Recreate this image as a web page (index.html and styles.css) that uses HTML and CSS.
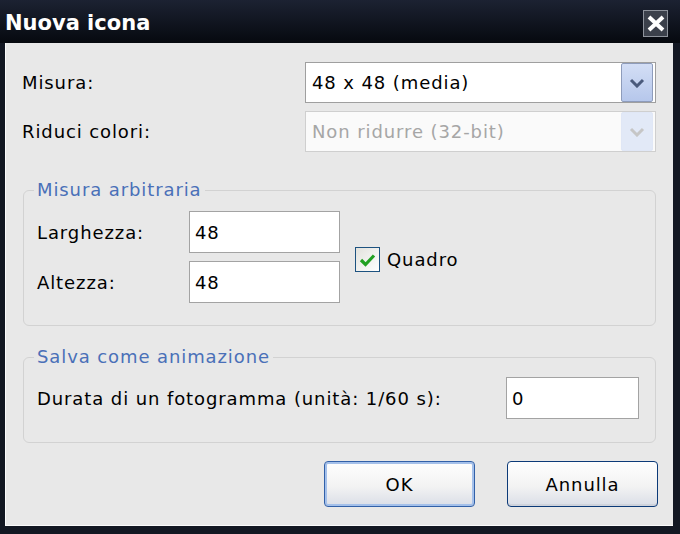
FILE: index.html
```html
<!DOCTYPE html>
<html lang="it">
<head>
    <meta charset="UTF-8">
    <title>Nuova icona</title>
    <link rel="stylesheet" href="styles.css">
</head>
<body>
    <div class="window">
        <div class="titlebar">
            <span class="title">Nuova icona</span>
            <span class="close">
                <svg width="22" height="24" viewBox="0 0 22 24"><path d="M4 6 L18 19 M18 6 L4 19" stroke="#fff" stroke-width="4" fill="none"/></svg>
            </span>
        </div>
        <div class="client">
            <div class="row">
                <span class="row-label">Misura:</span>
                <div class="combo">
                    <span class="combo-text">48 x 48 (media)</span>
                    <span class="combo-btn">
                        <svg width="16" height="10" viewBox="0 0 16 10"><path d="M2 2 L8 8 L14 2" stroke="#4a5a7c" stroke-width="3" fill="none"/></svg>
                    </span>
                </div>
            </div>
            <div class="row">
                <span class="row-label">Riduci colori:</span>
                <div class="combo combo-disabled">
                    <span class="combo-text">Non ridurre (32-bit)</span>
                    <span class="combo-btn">
                        <svg width="16" height="10" viewBox="0 0 16 10"><path d="M2 2 L8 8 L14 2" stroke="#c6c6c6" stroke-width="3" fill="none"/></svg>
                    </span>
                </div>
            </div>

            <fieldset class="group group-size">
                <legend>Misura arbitraria</legend>
                <div class="size-body">
                    <div class="fields">
                        <div class="field">
                            <span class="field-label">Larghezza:</span>
                            <span class="input">48</span>
                        </div>
                        <div class="field">
                            <span class="field-label">Altezza:</span>
                            <span class="input">48</span>
                        </div>
                    </div>
                    <label class="check">
                        <span class="box">
                            <svg width="17" height="14" viewBox="0 0 17 14"><path d="M2 7 L6.5 11.5 L15 2.5" stroke="#22a022" stroke-width="3.2" fill="none"/></svg>
                        </span>
                        Quadro
                    </label>
                </div>
            </fieldset>

            <fieldset class="group group-anim">
                <legend>Salva come animazione</legend>
                <div class="field field-anim">
                    <span>Durata di un fotogramma (unità: 1/60 s):</span>
                    <span class="input input-frame">0</span>
                </div>
            </fieldset>

            <div class="buttons">
                <button class="btn btn-default">OK</button>
                <button class="btn">Annulla</button>
            </div>
        </div>
    </div>
</body>
</html>
```

FILE: styles.css
```css
body {
    margin: 0;
    background: #121722;
    font-family: "DejaVu Sans", sans-serif;
}

.window {
    width: 680px;
    height: 534px;
    display: flex;
    flex-direction: column;
    background: #121722;
}

.titlebar {
    height: 43px;
    flex: none;
    box-sizing: border-box;
    display: flex;
    align-items: center;
    justify-content: space-between;
    padding: 0 12px 0 5px;
    background: linear-gradient(#1c2232, #06090f);
}

.title {
    color: #fff;
    font-size: 21px;
    font-weight: bold;
    margin-top: 2px;
}

.close {
    width: 25px;
    height: 27px;
    margin-top: 3px;
    box-sizing: border-box;
    border: 1px solid #8d929b;
    background: #3b404b;
    display: flex;
    align-items: center;
    justify-content: center;
}

.client {
    flex: 1;
    margin: 0 7px 8px 5px;
    padding: 19px 17px 0;
    background: #e8e8e8;
    box-shadow: inset 1px 0 #fbfbfb, inset 0 -1px #fbfbfb;
    color: #000;
    font-size: 18px;
    letter-spacing: 0.9px;
}

.row {
    display: flex;
    align-items: center;
    height: 41px;
}

.row + .row {
    margin-top: 8px;
}

.row-label {
    width: 283px;
}

.combo {
    flex: 1;
    height: 41px;
    box-sizing: border-box;
    display: flex;
    align-items: stretch;
    padding-right: 2px;
    border: 1px solid #9f9f9f;
    background: #fff;
}

.combo-text {
    flex: 1;
    display: flex;
    align-items: center;
    padding-left: 6px;
}

.combo-btn {
    width: 32px;
    box-sizing: border-box;
    display: flex;
    align-items: center;
    justify-content: center;
    border: 1px solid #8e9cbb;
    border-radius: 2px;
    background: linear-gradient(#d3def5, #b6c7eb);
}

.combo-disabled {
    border-color: #cfcfcf;
    background: #fafafa;
}

.combo-disabled .combo-text {
    color: #a6a6a6;
}

.combo-disabled .combo-btn {
    border-color: #e0e7f6;
    background: #e2e9f7;
}

.group {
    margin: 27px 0 0 1px;
    border: 1px solid #d2d2d2;
    border-radius: 6px;
}

.group legend {
    padding: 0 3px;
    margin-left: -3px;
    line-height: 22px;
    color: #4a70b8;
}

.group-size {
    padding: 10px 16px 22px 13px;
}

.group-anim {
    margin-top: 20px;
    padding: 9px 16px 23px 13px;
}

.size-body {
    display: flex;
    align-items: center;
}

.fields {
    display: flex;
    flex-direction: column;
    gap: 8px;
}

.field {
    display: flex;
    align-items: center;
}

.field-label {
    width: 152px;
}

.field-anim {
    justify-content: space-between;
}

.input {
    width: 151px;
    height: 42px;
    box-sizing: border-box;
    display: flex;
    align-items: center;
    padding-left: 5px;
    border: 1px solid #a3a3a3;
    background: #fff;
}

.input-frame {
    width: 133px;
}

.check {
    display: flex;
    align-items: center;
    gap: 7px;
    margin: 5px 0 0 15px;
}

.box {
    width: 25px;
    height: 25px;
    box-sizing: border-box;
    display: flex;
    align-items: center;
    justify-content: center;
    border: 1px solid #1d5280;
    background: linear-gradient(135deg, #e2e2dd, #fff);
}

.buttons {
    display: flex;
    justify-content: flex-end;
    gap: 32px;
    margin: 18px -2px 0 0;
}

.btn {
    width: 151px;
    height: 46px;
    font: inherit;
    letter-spacing: inherit;
    color: #000;
    border: 1px solid #0c3a78;
    border-radius: 4px;
    background: linear-gradient(#fefefe, #f3f3f3 55%, #dadee7);
    box-shadow: inset 0 -2px #cfd3dc;
}

.btn-default {
    border-color: #3160a8;
    box-shadow: inset 0 0 0 2px #a4c0ea;
}
```
